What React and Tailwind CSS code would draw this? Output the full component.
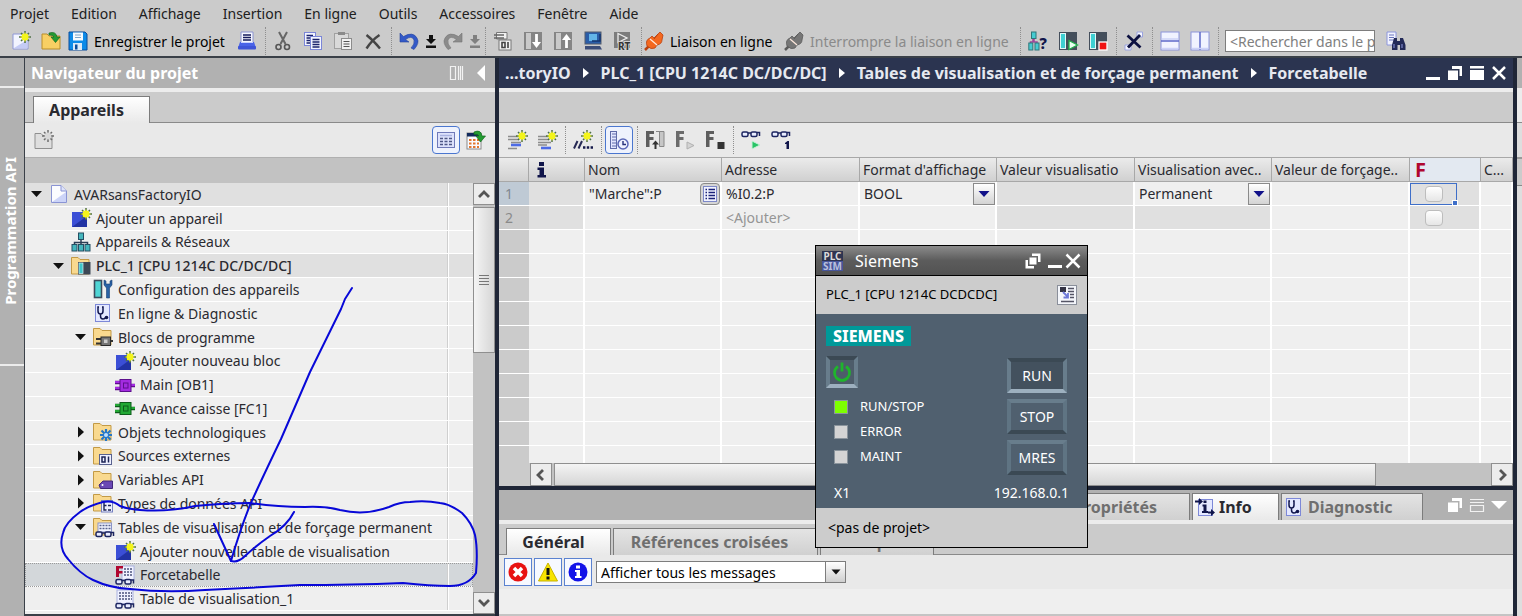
import { useState } from "react";

/* ---------- small icon set (20x20) ---------- */

function Svg({ children, className = "w-5 h-5", box = "0 0 20 20" }) {
    return (
        <svg viewBox={box} fill="none" className={`shrink-0 overflow-visible ${className}`} xmlns="http://www.w3.org/2000/svg">
            {children}
        </svg>
    );
}

const Spark = ({ x = 14, y = 6, gray = false }) => (
    <g transform={`translate(${x} ${y})`}>
        <path d="M0-6V6M-6 0H6M-4-4L4 4M4-4L-4 4" stroke={gray ? "#6e6e6e" : "#4f7046"} strokeWidth="1.5" />
        <circle r="3.400" fill={gray ? "#d8d8d8" : "#f4f51c"} />
        {!gray && <path d="M0-4.500V4.500M-4.500 0H4.500M-3-3L3 3M3-3L-3 3" stroke="#f4f51c" strokeWidth="0.900" />}
    </g>
);

const Folder = () => (
    <path d="M0.500 18V1.500H7L9 3.500H18V18Z" fill="#f9d98f" stroke="#c39a45" />
);

const Glasses = ({ y = 16, color = "#1c2560" }) => (
    <g transform={`translate(0 ${y})`} stroke={color} strokeWidth="1.5">
        <rect x="1" y="-2" width="6" height="4.5" rx="1.5" fill="#e8ecff" />
        <rect x="10" y="-2" width="6" height="4.5" rx="1.5" fill="#e8ecff" />
        <path d="M7-1H10M16-1.5H18.5V2" />
    </g>
);

const Stetho = () => (
    <>
        <rect x="2.5" y="1.5" width="14" height="17" fill="#e4e8ff" stroke="#7d88d8" />
        <path d="M6 4H5V8Q5 11 7.500 11Q10 11 10 8V4H9M7.500 11V13Q7.500 16 10 16Q12 16 12.500 14.500" stroke="#11164d" strokeWidth="1.5" />
        <circle cx="13.500" cy="14.500" r="1.800" fill="#11164d" />
    </>
);

const Block = ({ fill, dark }) => (
    <>
        <path d="M0 7.500H6M0 13.500H6M15 10.500H20" stroke={dark} strokeWidth="3.5" />
        <path d="M0 7H5M0 13H5M15 10H20" stroke={fill} strokeWidth="2" />
        <rect x="5" y="4.500" width="11" height="12" fill={fill} stroke={dark} />
        <rect x="8.500" y="8" width="4.500" height="5" fill={fill} stroke={dark} />
    </>
);

const Plug = ({ main, dark }) => (
    <>
        <path d="M1 19L5 15" stroke={dark} strokeWidth="2.5" />
        <path d="M3 15Q1 9 6 7L8 5L10 7L14 3L16 1L19 4L18 9Q18 13 13 14L11 17Q7 19 3 15Z" fill={main} stroke={dark} strokeWidth="0.8" />
        <path d="M6 8L13 14" stroke="#ffe9dd" strokeWidth="1.2" />
        <path d="M10 8L14 3" stroke={dark} strokeWidth="1" />
    </>
);

const icons = {
    newProject: <><path d="M2 3H12L17 8V18H2Z" fill="#f2f4ff" stroke="#8e97d6" /><path d="M3 17L16 9V17Z" fill="#c4cbf5" /><Spark /></>,
    openProject: <><path d="M1 18V3H6L8 5H19V18Z" fill="#f8cf63" stroke="#b98d2b" /><path d="M8 2Q15 0 16 6H19L14.500 11.500L10 6H13Q12 3.500 8 4Z" fill="#239b32" stroke="#14691f" strokeWidth="0.7" /></>,
    save: <><path d="M1 1H17L19 3V19H1Z" fill="#0d8be8" stroke="#0a4c9c" /><rect x="5" y="1.5" width="10" height="8" fill="#f5fbff" /><path d="M7 4H13M7 6.500H13" stroke="#7ea5c8" /><rect x="5" y="12" width="9" height="7" fill="#dceaf7" /><rect x="7" y="13.500" width="2.500" height="5" fill="#0a4c9c" /></>,
    print: <><path d="M4 12V1H16V12Z" fill="#f6f7ff" stroke="#8a93d0" /><path d="M6 4H14M6 6.500H14M6 9H14" stroke="#141b5c" strokeWidth="1.4" /><path d="M1 17L3 11H17L19 17Z" fill="#4a63e8" /><rect x="1" y="15" width="18" height="3.500" rx="1" fill="#3f55d8" /><path d="M4 11.500H16" stroke="#c9d2ff" /></>,
    cut: <><path d="M6 1L12.500 13M14 1L7.500 13" stroke="#666" strokeWidth="2" /><circle cx="5.500" cy="16" r="2.500" stroke="#555" strokeWidth="1.600" /><circle cx="14" cy="16" r="2.500" stroke="#555" strokeWidth="1.600" /></>,
    copy: <><rect x="1.500" y="1.500" width="11" height="13" fill="#f3f5ff" stroke="#7b86d8" /><path d="M3.500 4.500H10M3.500 7H10M3.500 9.500H10M3.500 12H10" stroke="#1a226b" strokeWidth="1.300" /><rect x="7.500" y="5.500" width="11" height="13" fill="#f3f5ff" stroke="#7b86d8" /><path d="M9.500 8.500H16.500M9.500 11H16.500M9.500 13.500H16.500M9.500 16H16.500" stroke="#1a226b" strokeWidth="1.300" /></>,
    paste: <><rect x="1.500" y="2.500" width="14" height="15" fill="#d9d9d9" stroke="#a0a0a0" /><rect x="5" y="1" width="7" height="3" fill="#8a8a8a" /><rect x="8.500" y="7.500" width="10" height="11" fill="#f2f2f2" stroke="#8c8c8c" /><path d="M10.500 10.500H16.500M10.500 13H16.500M10.500 15.500H16.500" stroke="#555" strokeWidth="1.200" /></>,
    del: <path d="M3.500 4Q10 9 17 17.500M16.500 4Q9 9 3.500 17.500" stroke="#454545" strokeWidth="2.400" />,
    undo: <path d="M1 2V11H10L6.500 8.500Q13 4 15 9Q16 13 12 17L15 18.500Q21 12 18 7Q14 0 4.500 5.500Z" fill="#3359c8" stroke="#27449a" strokeWidth="0.600" />,
    redo: <path d="M19 2V11H10L13.500 8.500Q7 4 5 9Q4 13 8 17L5 18.500Q-1 12 2 7Q6 0 15.500 5.500Z" fill="#8b8b8b" stroke="#757575" strokeWidth="0.600" />,
    compile: <><path d="M3.500 1.500H14V8H3.500Z" fill="#f1f1f1" stroke="#777" /><path d="M1 4H11M1 7H11" stroke="#666" strokeWidth="1.500" /><rect x="6" y="9" width="12" height="10" fill="#f1f1f1" stroke="#777" /><path d="M9 11.500H12V16.500H9ZM15 11V17" stroke="#444" strokeWidth="1.600" /></>,
    download: <><rect x="1" y="1" width="18" height="18" fill="#858585" /><rect x="3" y="2" width="5" height="16" fill="#c9c9c9" /><path d="M13.500 3V12" stroke="#fff" strokeWidth="2.800" /><path d="M9 11H18L13.500 17Z" fill="#fff" /></>,
    upload: <><rect x="1" y="1" width="18" height="18" fill="#858585" /><rect x="3" y="2" width="5" height="16" fill="#c9c9c9" /><path d="M13.500 8V17" stroke="#fff" strokeWidth="2.800" /><path d="M9 9H18L13.500 3Z" fill="#fff" /></>,
    simulate: <><rect x="2" y="1" width="16" height="12" fill="#2a5da8" stroke="#555c6c" /><rect x="6" y="3" width="8" height="7" fill="#63b5e8" /><path d="M9 10H17V3" stroke="#16356d" strokeWidth="1.500" /><path d="M2 15H17L19 18.500H2Z" fill="#3c4d78" /></>,
    runtime: <><rect x="1" y="1" width="16" height="16" fill="#7c7c7c" /><path d="M5 2.500L14 7L5 11.500Z" fill="#777" stroke="#eee" strokeWidth="1.300" /><text x="5" y="19" fontSize="10" fontWeight="700" fill="#333" stroke="#d0d0d0" strokeWidth="2" paintOrder="stroke">RT</text></>,
    goOnline: <Plug main="#f4681f" dark="#b9400f" />,
    goOffline: <Plug main="#767676" dark="#5b5b5b" />,
    access: <><path d="M5 7V11M2.500 14V11H9V14M6 5V11" stroke="#a0459b" strokeWidth="1.500" /><rect x="3.500" y="1" width="4.500" height="6.500" fill="#46cbd1" stroke="#2f777b" /><rect x="0.800" y="12" width="4" height="7" fill="#46cbd1" stroke="#2f777b" /><rect x="7" y="12" width="4" height="7" fill="#46cbd1" stroke="#2f777b" /><text x="11.500" y="18" fontSize="15" fontWeight="800" fill="#10154a">?</text></>,
    startCpu: <><rect x="1" y="1" width="18" height="18" fill="#444e5b" /><rect x="2.500" y="2.500" width="5" height="15" fill="#3fd0d3" stroke="#e0f8f8" /><path d="M11 9.500L19.500 14L11 18.500Z" fill="#e8fff0" stroke="#1faf4c" strokeWidth="1.300" /></>,
    stopCpu: <><rect x="1" y="1" width="18" height="18" fill="#444e5b" /><rect x="2.500" y="2.500" width="5" height="15" fill="#3fd0d3" stroke="#e0f8f8" /><rect x="11" y="11" width="8" height="8" fill="#f01212" stroke="#fff" strokeWidth="1.300" /></>,
    crossRef: <><path d="M13 1H18.500V6H13ZM1 14H7V19H1Z" fill="#f5f6ff" stroke="#9aa3e0" /><path d="M3.500 4.500L16.500 16.500M16 4L4 16.500" stroke="#0c1040" strokeWidth="2.800" /></>,
    splitH: <><rect x="1" y="1" width="18" height="18" fill="#f1f3ff" stroke="#8d96dc" /><path d="M1 10H19" stroke="#5d68c8" strokeWidth="1.500" /><path d="M2 8H18M2 17.500H18" stroke="#cdd3f8" strokeWidth="1.500" /></>,
    splitV: <><rect x="1" y="1" width="18" height="18" fill="#f1f3ff" stroke="#8d96dc" /><path d="M10 1V19" stroke="#5d68c8" strokeWidth="1.500" /><path d="M2 17.500H18" stroke="#cdd3f8" strokeWidth="1.500" /></>,
    find: <><path d="M1 1H10V14H1Z" fill="#f1f3ff" stroke="#8d96dc" /><path d="M3 4H8M3 6.500H8M3 9H8" stroke="#6b75bd" /><path d="M8 7H11V10H14V7H17L19.500 14V19H14V14H11.500V19H6V14Z" fill="#232a58" /><path d="M8 13V17M16 13V17" stroke="#7c86c8" strokeWidth="1.200" /></>,
    addFolder: <><path d="M1 18.500V3.500H7L9 5.500H18V18.500Z" fill="#dedede" stroke="#8f8f8f" /><Spark x={14} y={6} gray /></>,
    listView: <><rect x="1.500" y="2.500" width="17" height="15" fill="#dde2fb" stroke="#6f79b8" /><path d="M4 5.500H16" stroke="#a9b2e0" strokeWidth="1.500" /><path d="M4 8.500H16M4 11.500H16M4 14.500H16" stroke="#4d5685" strokeWidth="1.500" strokeDasharray="3 1.500" /></>,
    gridGo: <><rect x="1" y="3" width="14" height="16" fill="#f9fbff" stroke="#8a8a8a" /><rect x="1" y="3" width="12" height="3.500" fill="#122a5c" /><path d="M3 10H13M3 13.500H13M3 17H13" stroke="#e3762d" strokeWidth="2.200" strokeDasharray="2.500 1.500" /><path d="M8 2Q15-1 16 6H19.500L14.500 12L10 6H13Q12 3.500 8 4.500Z" fill="#239b32" stroke="#14691f" strokeWidth="0.700" /></>,
    project: <><path d="M2.500 1.500H12L17.500 7V18.500H2.500Z" fill="#fbfcff" stroke="#8a94d4" /><path d="M3 18L17 8V18Z" fill="#ccd4f8" /><path d="M12 1.500V7H17.500" fill="#dfe4fb" stroke="#8a94d4" /></>,
    addBlue: <><rect x="1" y="4" width="15" height="15" fill="#3b4fd6" /><path d="M1 19L16 8V19Z" fill="#2233a4" /><Spark x={15} y={6} /></>,
    network: <><path d="M10 7V10M3.500 13V10.500H16.500V13M10 10V13" stroke="#2b3e55" strokeWidth="1.500" /><rect x="7.500" y="1" width="5" height="6.500" fill="#46b6bd" stroke="#244f63" /><rect x="1" y="12.500" width="5" height="6.500" fill="#46b6bd" stroke="#244f63" /><rect x="7.500" y="12.500" width="5" height="6.500" fill="#46b6bd" stroke="#244f63" /><rect x="14" y="12.500" width="5" height="6.500" fill="#46b6bd" stroke="#244f63" /></>,
    plc: <><Folder /><rect x="7" y="6" width="12.500" height="12.500" fill="#3d4856" /><rect x="8" y="7" width="4" height="10.500" fill="#3fc5c9" stroke="#d8f4f4" strokeWidth="0.700" /></>,
    config: <><rect x="1.500" y="1.500" width="7" height="17" fill="#4fd5d5" stroke="#3b4a5b" strokeWidth="1.600" /><path d="M11 1V6L13.500 9V19H16.500V9L19 6V1L17 2V5H13V2Z" fill="#2a62a5" stroke="#173f74" strokeWidth="0.600" /></>,
    diag: <Stetho />,
    blocks: <><Folder /><path d="M3 12H9M3 16.500H9M17 14H20" stroke="#333" strokeWidth="2" /><rect x="8" y="10" width="9.500" height="8.500" fill="#777" stroke="#2c2c2c" /><rect x="11" y="12.500" width="3.500" height="3.500" fill="#ccc" /></>,
    ob: <Block fill="#a32be0" dark="#5d0f8c" />,
    fc: <Block fill="#22a834" dark="#0d5c1a" />,
    tech: <><Folder /><path d="M13 7V19M7 13H19M8.500 8.500L17.500 17.500M17.500 8.500L8.500 17.500" stroke="#2577c9" strokeWidth="2.200" /><circle cx="13" cy="13" r="2" fill="#bfe0ff" /></>,
    sources: <><Folder /><rect x="6.500" y="8.500" width="12" height="10" fill="#eef0ff" stroke="#59628f" /><path d="M9 11H12V16H9ZM15.500 10.500V16.500" stroke="#1c2354" strokeWidth="1.500" /></>,
    tags: <><Folder /><path d="M6 15L10 11H19.500V18.500H7.500Z" fill="#6a47b4" stroke="#40277a" /><circle cx="9.500" cy="15" r="1" fill="#fff" /></>,
    types: <><Folder /><rect x="8.500" y="7.500" width="11" height="11.500" fill="#eef0ff" stroke="#7480c0" /><path d="M11 9V17H13.500M11 12.500H13.500M15 12.500H18M15 17H18" stroke="#1c2354" strokeWidth="1.400" /></>,
    watchTables: <><Folder /><rect x="5" y="6" width="13.500" height="9" fill="#f3f5ff" stroke="#8a94c8" /><path d="M6.500 8.500H17.500M6.500 11.500H17.500" stroke="#59628f" strokeDasharray="2 1" strokeWidth="1.300" /><g transform="translate(2 1)"><Glasses y={16} /></g></>,
    force: <><rect x="7" y="1" width="12" height="14" fill="#f0f2ff" stroke="#aab2e0" /><path d="M9 4H18M9 7H18M9 10H18" stroke="#4c547f" strokeDasharray="2 1" strokeWidth="1.300" /><path d="M1 1H8V3.500H4V6H7.500V8.500H4V12H1Z" fill="#b0072f" /><g transform="translate(0 1)"><Glasses y={15.500} /></g></>,
    watch: <><rect x="2" y="1" width="16" height="14" fill="#f0f2ff" stroke="#aab2e0" /><path d="M4 4H17M4 7H17M4 10H17" stroke="#4c547f" strokeDasharray="2 1" strokeWidth="1.300" /><g transform="translate(0 1)"><Glasses y={15.500} /></g></>,
    rowAbove: <><path d="M1 6.500H12M1 9.500H12M4 12.500H14M1 18.500H10" stroke="#8c8c8c" strokeWidth="1.600" /><path d="M4 15H14" stroke="#4d6be6" strokeWidth="2.600" /><Spark x={15} y={6} /></>,
    rowBelow: <><path d="M1 6.500H12M1 9.500H12M1 12.500H14M1 15H10" stroke="#8c8c8c" strokeWidth="1.600" /><path d="M4 18H14" stroke="#4d6be6" strokeWidth="2.600" /><Spark x={15} y={6} /></>,
    comment: <><path d="M1 18.500L4.500 11M5.500 18.500L9 11" stroke="#272a55" strokeWidth="2" /><path d="M10 17.500H20" stroke="#15184a" strokeWidth="2.400" strokeDasharray="2.400 1.400" /><Spark x={14} y={6} /></>,
    clock: <><rect x="1.500" y="1.500" width="6" height="17" fill="#e2e6ff" stroke="#5f6ba8" /><path d="M3 4H7M3 7H7M3 10H7M3 13H7M3 16H7" stroke="#5f6ba8" /><circle cx="14" cy="14" r="5" fill="#eef1ff" stroke="#5a67b8" strokeWidth="1.500" /><path d="M14 11V14.500H17" stroke="#26307a" strokeWidth="1.400" /></>,
    forceAll: <><path d="M1 1H9V4H4.500V7H8.500V10H4.500V17H1Z" fill="#5e5e5e" /><path d="M10.500 19V13" stroke="#333" strokeWidth="2" /><path d="M7 14.500L10.500 10.500L14 14.500Z" fill="#333" /><path d="M11 1.500H19V16.500H14.500V1.500" fill="#c6c6c6" stroke="#888" /></>,
    forceStart: <><path d="M1 1H9V4H4.500V7H8.500V10H4.500V17H1Z" fill="#6b6b6b" /><path d="M12 12L19 15.500L12 19Z" fill="#d4d4d4" stroke="#b0b0b0" /></>,
    forceStop: <><path d="M1 1H9V4H4.500V7H8.500V10H4.500V17H1Z" fill="#5e5e5e" /><rect x="12.500" y="12" width="7" height="7" fill="#333" /></>,
    watchRun: <><Glasses y={4} /><path d="M11 11L19 15L11 19Z" fill="#28c466" stroke="#c6f3d8" /></>,
    watchOnce: <><Glasses y={4} /><path d="M14 13L16.500 11H18V19H15.500V14H14Z" fill="#10154a" /></>,
};

const Icon = ({ name, className }) => <Svg className={className}>{icons[name]}</Svg>;

function IconButton({ name, label, active = false }) {
    return (
        <button aria-label={label} title={label} className="flex w-[30px] h-7 items-center justify-center shrink-0">
            {active ? (
                <span className="flex w-7 h-7 items-center justify-center rounded-sm border border-[#4a76cf] bg-[#eef2fd]">
                    <Icon name={name} />
                </span>
            ) : (
                <Icon name={name} />
            )}
        </button>
    );
}

const Sep = () => (
    <span className="flex w-1.5 h-7 justify-center shrink-0">
        <span className="border-l border-dotted border-[#8f8f8f]" />
    </span>
);

const MoreArrow = ({ color, label }) => (
    <button aria-label={label} className="flex w-3.5 h-7 items-center justify-center shrink-0">
        <Svg className="w-3 h-4" box="0 0 12 16">
            <path d="M4 2H8V6H11L6 11L1 6H4ZM1 12.500H11V15H1Z" fill={color} />
        </Svg>
    </button>
);

/* ---------- menu + main toolbar ---------- */

const menus = ["Projet", "Edition", "Affichage", "Insertion", "En ligne", "Outils", "Accessoires", "Fenêtre", "Aide"];

function MenuBar() {
    return (
        <nav className="flex h-[26px] items-center gap-[22px] pl-2.5 text-[14px] text-[#202020]">
            {menus.map((m) => (
                <button key={m}>{m}</button>
            ))}
        </nav>
    );
}

function MainToolbar() {
    return (
        <div className="flex h-8 items-center pl-1.5 border-b-2 border-[#3a4048] text-[14px]">
            <IconButton name="newProject" label="Nouveau projet" />
            <IconButton name="openProject" label="Ouvrir un projet" />
            <button className="flex w-[166px] shrink-0 items-center gap-1.5 pl-0.5">
                <Icon name="save" />
                Enregistrer le projet
            </button>
            <IconButton name="print" label="Imprimer" />
            <Sep />
            <IconButton name="cut" label="Couper" />
            <IconButton name="copy" label="Copier" />
            <IconButton name="paste" label="Coller" />
            <IconButton name="del" label="Supprimer" />
            <Sep />
            <IconButton name="undo" label="Annuler" />
            <MoreArrow color="#111111" label="Liste des actions à annuler" />
            <IconButton name="redo" label="Rétablir" />
            <MoreArrow color="#808080" label="Liste des actions à rétablir" />
            <Sep />
            <IconButton name="compile" label="Compiler" />
            <IconButton name="download" label="Charger dans l'appareil" />
            <IconButton name="upload" label="Charger depuis l'appareil" />
            <IconButton name="simulate" label="Démarrer la simulation" />
            <IconButton name="runtime" label="Démarrer Runtime" />
            <Sep />
            <button className="flex w-[140px] shrink-0 items-center gap-1.5">
                <Icon name="goOnline" />
                Liaison en ligne
            </button>
            <button className="flex w-[233px] shrink-0 items-center gap-1.5 text-[#8a8a8a]">
                <Icon name="goOffline" />
                Interrompre la liaison en ligne
            </button>
            <Sep />
            <IconButton name="access" label="Abonnés accessibles" />
            <IconButton name="startCpu" label="Démarrer CPU" />
            <IconButton name="stopCpu" label="Arrêter CPU" />
            <Sep />
            <IconButton name="crossRef" label="Références croisées" />
            <Sep />
            <IconButton name="splitH" label="Partager horizontalement" />
            <IconButton name="splitV" label="Partager verticalement" />
            <Sep />
            <input
                aria-label="Rechercher dans le projet"
                placeholder="<Rechercher dans le projet>"
                className="ml-1 mr-1.5 h-[22px] w-[150px] border border-[#7d7d7d] bg-white pl-1 placeholder:text-[#808080]"
            />
            <IconButton name="find" label="Rechercher" />
        </div>
    );
}

/* ---------- project tree ---------- */

const tree = [
    { level: 0, icon: "project", text: "AVARsansFactoryIO", open: true, shade: true },
    { level: 1, icon: "addBlue", text: "Ajouter un appareil" },
    { level: 1, icon: "network", text: "Appareils & Réseaux" },
    { level: 1, icon: "plc", text: "PLC_1 [CPU 1214C DC/DC/DC]", open: true, shade: true, strong: true },
    { level: 2, icon: "config", text: "Configuration des appareils" },
    { level: 2, icon: "diag", text: "En ligne & Diagnostic" },
    { level: 2, icon: "blocks", text: "Blocs de programme", open: true },
    { level: 3, icon: "addBlue", text: "Ajouter nouveau bloc" },
    { level: 3, icon: "ob", text: "Main [OB1]" },
    { level: 3, icon: "fc", text: "Avance caisse [FC1]" },
    { level: 2, icon: "tech", text: "Objets technologiques", closed: true },
    { level: 2, icon: "sources", text: "Sources externes", closed: true },
    { level: 2, icon: "tags", text: "Variables API", closed: true },
    { level: 2, icon: "types", text: "Types de données API", closed: true },
    { level: 2, icon: "watchTables", text: "Tables de visualisation et de forçage permanent", open: true },
    { level: 3, icon: "addBlue", text: "Ajouter nouvelle table de visualisation" },
    { level: 3, icon: "force", text: "Forcetabelle" },
    { level: 3, icon: "watch", text: "Table de visualisation_1" },
];

const indents = ["pl-0.5", "pl-6", "pl-[46px]", "pl-[68px]"];

function TreeRow({ item, selected, onSelect }) {
    const bg = selected ? "bg-[#d3d7da] outline outline-dotted outline-[#9a9a9a] -outline-offset-1" : item.shade ? "bg-[#e0e0e0]" : "bg-[#efefef]";

    return (
        <li className={`flex min-h-0 border-b border-white ${bg}`}>
            <button
                onClick={onSelect}
                className={`flex min-w-0 flex-1 items-center overflow-hidden whitespace-nowrap border-r border-[#cfcfcf] text-[#2a2a30] ${indents[item.level]}`}
            >
                <span className="flex w-[22px] shrink-0 pl-1">
                    {item.open && <Svg className="w-3 h-3" box="0 0 12 12"><path d="M0 3H11L5.500 9Z" fill="#111" /></Svg>}
                    {item.closed && <Svg className="w-3 h-3" box="0 0 12 12"><path d="M3 0.500V11.500L9 6Z" fill="#111" /></Svg>}
                </span>
                <Icon name={item.icon} />
                <span className={item.strong ? "pl-[5px] font-medium" : "pl-[5px]"}>{item.text}</span>
            </button>
            <span className="w-[25px] border-l border-white" />
        </li>
    );
}

const Chevron = ({ d }) => (
    <Svg className="w-3.5 h-3.5" box="0 0 14 14">
        <path d={d} stroke="#555" strokeWidth="2.800" />
    </Svg>
);

function Navigator() {
    const [selected, setSelected] = useState(16);

    return (
        <aside className="flex w-[471px] shrink-0 flex-col border-l border-[#3a4048]">
            <header className="flex h-[30px] shrink-0 items-center bg-[#b1b1b1] pl-1.5 pr-2 text-[16px] font-bold text-white">
                <h2 className="flex-1">Navigateur du projet</h2>
                <Svg className="mr-2.5 w-4 h-4" box="0 0 16 16">
                    <path d="M1.500 1V15M6.500 1V15M1 1.500H7M1 14.500H7M9.500 1V15M11.500 1V15M13.500 1V15" stroke="#f2f2f2" strokeWidth="1.200" />
                </Svg>
                <Svg className="w-3 h-4" box="0 0 12 16"><path d="M10 0V16L2 8Z" fill="#fff" /></Svg>
            </header>
            <div className="flex h-[35px] shrink-0 items-end border-t-4 border-[#ececec] bg-[#cbcbcb]">
                <span className="h-px w-2 bg-[#8a8a8a]" />
                <button className="h-[27px] w-[117px] border border-b-0 border-[#7c7c7c] bg-linear-to-b from-white to-[#e9e9e9] pr-2.5 text-[16px] font-bold text-[#2a2a30]">
                    Appareils
                </button>
                <span className="h-px flex-1 bg-[#8a8a8a]" />
            </div>
            <div className="flex h-[34px] shrink-0 items-center bg-[#e9e9e9] pl-1">
                <IconButton name="addFolder" label="Nouveau groupe" />
                <span className="flex-1" />
                <IconButton name="listView" label="Vue détaillée" active />
                <IconButton name="gridGo" label="Afficher la vue d'ensemble" />
                <span className="w-1" />
            </div>
            <div className="h-[26px] shrink-0 border-t border-[#b0b0b0] bg-[#c2c2c2]" />
            <div className="flex min-h-0 flex-1 border-b-2 border-[#3a4048]">
                <div className="min-w-0 flex-1 overflow-hidden bg-[#efefef]">
                    <ul className="grid h-[428px] grid-rows-[repeat(18,minmax(0,1fr))] text-[14px]">
                        {tree.map((item, i) => (
                            <TreeRow key={i} item={item} selected={i === selected} onSelect={() => setSelected(i)} />
                        ))}
                    </ul>
                </div>
                <div className="flex w-[22px] shrink-0 flex-col bg-[#c2c2c2]">
                    <button aria-label="Défiler vers le haut" className="flex h-[22px] items-center justify-center border border-[#8f8f8f] bg-[#ececec]">
                        <Chevron d="M2 10L7 5L12 10" />
                    </button>
                    <div className="mt-0.5 flex h-[146px] items-center justify-center border border-[#8f8f8f] bg-linear-to-r from-[#f4f4f4] to-[#d6d6d6]">
                        <Svg className="w-3 h-3" box="0 0 12 12">
                            <path d="M1 1.500H11M1 4.500H11M1 7.500H11M1 10.500H11" stroke="#777" />
                        </Svg>
                    </div>
                    <span className="flex-1" />
                    <button aria-label="Défiler vers le bas" className="flex h-[22px] items-center justify-center border border-[#8f8f8f] bg-[#ececec]">
                        <Chevron d="M2 4L7 9L12 4" />
                    </button>
                </div>
            </div>
        </aside>
    );
}

/* ---------- force table ---------- */

const crumbs = ["...toryIO", "PLC_1 [CPU 1214C DC/DC/DC]", "Tables de visualisation et de forçage permanent", "Forcetabelle"];

function TitleBar() {
    return (
        <header className="flex h-[30px] shrink-0 items-center bg-[#2b3450] pl-1.5 pr-1.5 text-[16px] font-bold text-[#e6e9f0]">
            <ol className="flex flex-1 items-center whitespace-nowrap">
                {crumbs.map((c, i) => (
                    <li key={c} className="flex items-center">
                        {i > 0 && <Svg className="mx-3 w-1.5 h-2.5" box="0 0 6 10"><path d="M0 0V10L6 5Z" fill="#fff" /></Svg>}
                        {c}
                    </li>
                ))}
            </ol>
            <div className="flex gap-1.5">
                <button aria-label="Réduire"><Svg className="w-4 h-4" box="0 0 16 16"><path d="M1 12H15V15H1Z" fill="#fff" /></Svg></button>
                <button aria-label="Détacher"><Svg className="w-4 h-4" box="0 0 16 16"><path d="M5 1H15V11H12.500V4H5Z M1 5.500H11V15H1Z" fill="#fff" /></Svg></button>
                <button aria-label="Agrandir"><Svg className="w-4 h-4" box="0 0 16 16"><path d="M1 1H15V3.500H1ZM1 5H15V15H1Z" fill="#fff" /></Svg></button>
                <button aria-label="Fermer"><Svg className="w-4 h-4" box="0 0 16 16"><path d="M2 2L14 14M14 2L2 14" stroke="#fff" strokeWidth="2.500" /></Svg></button>
            </div>
        </header>
    );
}

function CellSelect({ label, value }) {
    return (
        <div className="relative">
            <select aria-label={label} className="block h-[22px] w-full appearance-none bg-transparent pl-1 outline-none">
                <option>{value}</option>
            </select>
            <span className="pointer-events-none absolute right-0 top-0 flex h-[22px] w-[22px] items-center justify-center border border-[#8a8a8a] bg-linear-to-b from-white to-[#d3d3d3]">
                <Svg className="w-3 h-3" box="0 0 12 12"><path d="M0.500 3H11.500L6 9Z" fill="#12128a" /></Svg>
            </span>
        </div>
    );
}

const Check = ({ label }) => (
    <input
        type="checkbox"
        aria-label={label}
        className="block h-4 w-[18px] appearance-none rounded-sm border border-[#bdbdbd] bg-linear-to-b from-white to-[#e6e6e6] checked:bg-[#4a76cf]"
    />
);

const headCell = "h-6 border-r border-b border-[#a8a8a8] p-0 pl-[3px] text-left font-normal overflow-hidden whitespace-nowrap";
const num = "h-6 border-b border-white p-0 pl-1.5";
const cell = "h-6 border-r-2 border-b border-white p-0";
const cellDark = "h-6 border-r-2 border-b border-white p-0 bg-[#e0e0e0]";

function ForceTable() {
    return (
        <table className="w-full table-fixed border-separate border-spacing-0 bg-[#efefef] text-[14px] leading-5 text-[#2a2a30]">
            <colgroup>
                <col className="w-[30px]" />
                <col className="w-[56px]" />
                <col className="w-[137px]" />
                <col className="w-[138px]" />
                <col className="w-[137px]" />
                <col className="w-[138px]" />
                <col className="w-[137px]" />
                <col className="w-[138px]" />
                <col className="w-[71px]" />
                <col />
            </colgroup>
            <thead>
                <tr className="bg-linear-to-b from-[#ebebeb] to-[#cfcfcf]">
                    <th className={headCell} />
                    <th className={headCell}>
                        <Svg className="ml-1 w-3 h-4" box="0 0 12 16"><path d="M3 0H8V4H3ZM1.500 5.500H8V13H10V15.500H1.500V13H3.500V8H1.500Z" fill="#10154a" /></Svg>
                    </th>
                    <th className={headCell}>Nom</th>
                    <th className={headCell}>Adresse</th>
                    <th className={headCell}>Format d'affichage</th>
                    <th className={headCell}>Valeur visualisatio</th>
                    <th className={headCell}>Visualisation avec..</th>
                    <th className={headCell}>Valeur de forçage..</th>
                    <th className={`${headCell} bg-[#e3e9f1] text-[20px] text-[#b0072f]`}>
                        <b className="pl-0.5">F</b>
                    </th>
                    <th className={headCell}>C...</th>
                </tr>
            </thead>
            <tbody>
                <tr>
                    <td className={`${num} bg-[#bfcad5] text-[#7f8790]`}>1</td>
                    <td className={cellDark} />
                    <td className={cell}>
                        <div className="flex items-center justify-between pl-1">
                            "Marche":P
                            <button aria-label="Choisir une variable" className="flex h-[22px] w-5 items-center justify-center rounded-sm border border-[#8a8a8a] bg-[#d5d5d5]">
                                <Svg className="w-3.5 h-4" box="0 0 14 16">
                                    <rect x="0.500" y="0.500" width="13" height="15" fill="#f1f3ff" stroke="#7d88c8" />
                                    <path d="M2.500 3.500H4M2.500 6.500H4M2.500 9.500H4M2.500 12.500H4M5.500 3.500H12M5.500 6.500H12M5.500 9.500H12M5.500 12.500H12" stroke="#1a2278" strokeWidth="1.300" />
                                </Svg>
                            </button>
                        </div>
                    </td>
                    <td className={cell}><span className="pl-1">%I0.2:P</span></td>
                    <td className={cell}><CellSelect label="Format d'affichage" value="BOOL" /></td>
                    <td className={cellDark} />
                    <td className={cell}><CellSelect label="Visualisation avec" value="Permanent" /></td>
                    <td className={cell} />
                    <td className={cellDark}>
                        <div className="relative flex h-[22px] w-[47px] items-center justify-center border border-[#3f6fc8]">
                            <Check label="Forçage ligne 1" />
                            <span className="absolute -bottom-0.5 -right-0.5 h-1.5 w-1.5 border border-white bg-[#3f6fc8]" />
                        </div>
                    </td>
                    <td className={cell} />
                </tr>
                <tr>
                    <td className={`${num} bg-[#cbcbcb] text-[#8a8a8a]`}>2</td>
                    <td className={cellDark} />
                    <td className={cell} />
                    <td className={cell}><span className="pl-1 text-[#959595]">&lt;Ajouter&gt;</span></td>
                    <td className={cell} />
                    <td className={cellDark} />
                    <td className={cellDark} />
                    <td className={cell} />
                    <td className={cellDark}>
                        <div className="flex w-[47px] justify-center"><Check label="Forçage ligne 2" /></div>
                    </td>
                    <td className={cell} />
                </tr>
                {Array.from({ length: 10 }, (_, r) => (
                    <tr key={r}>
                        <td className={`${num} bg-[#cbcbcb]`} />
                        {Array.from({ length: 9 }, (_, c) => (
                            <td key={c} className={cell} />
                        ))}
                    </tr>
                ))}
            </tbody>
        </table>
    );
}

function Editor() {
    return (
        <section className="flex min-h-0 flex-1 flex-col">
            <TitleBar />
            <div className="h-[35px] shrink-0 border-t-4 border-b border-t-[#ececec] border-b-[#8a8a8a] bg-[#cbcbcb]" />
            <div className="flex h-[34px] shrink-0 items-center bg-[#e9e9e9] pl-[3px]">
                <IconButton name="rowAbove" label="Insérer une ligne au-dessus" />
                <IconButton name="rowBelow" label="Insérer une ligne au-dessous" />
                <Sep />
                <IconButton name="comment" label="Insérer un commentaire" />
                <Sep />
                <IconButton name="clock" label="Mode étendu" active />
                <Sep />
                <IconButton name="forceAll" label="Forcer tout" />
                <IconButton name="forceStart" label="Démarrer le forçage" />
                <IconButton name="forceStop" label="Arrêter le forçage" />
                <Sep />
                <IconButton name="watchRun" label="Visualiser tout" />
                <IconButton name="watchOnce" label="Visualiser une fois" />
            </div>
            <div className="min-h-0 flex-1 overflow-hidden border-t border-[#a8a8a8]">
                <ForceTable />
            </div>
            <div className="flex h-[23px] shrink-0 bg-[#c2c2c2]">
                <span className="w-[31px] bg-[#cbcbcb]" />
                <button aria-label="Défiler à gauche" className="flex w-[22px] items-center justify-center border border-[#8f8f8f] bg-[#ececec]">
                    <Chevron d="M9 2L4 7L9 12" />
                </button>
                <span className="ml-0.5 w-[822px] border border-[#8f8f8f] bg-linear-to-b from-[#f4f4f4] to-[#d6d6d6]" />
                <span className="flex-1" />
                <button aria-label="Défiler à droite" className="flex w-[22px] items-center justify-center border border-[#8f8f8f] bg-[#ececec]">
                    <Chevron d="M5 2L10 7L5 12" />
                </button>
            </div>
        </section>
    );
}

/* ---------- inspector ---------- */

const tabOff = "border border-b-0 border-[#7c7c7c] bg-linear-to-b from-[#e4e4e4] to-[#d0d0d0] text-[#6f6f6f]";
const tabOn = "border border-b-0 border-[#7c7c7c] bg-linear-to-b from-white to-[#e9e9e9] text-[#2a2a30]";

function Inspector() {
    return (
        <section className="flex h-[130px] shrink-0 flex-col border-t-4 border-[#1f2637] bg-[#efefef]">
            <div className="flex h-[30px] shrink-0 items-end justify-end bg-[#b1b1b1] pr-1.5 text-[16px] font-bold">
                <button className={`h-[27px] w-[130px] pr-8 text-right ${tabOff}`}>Propriétés</button>
                <button className={`ml-0.5 flex h-[27px] w-[87px] items-center gap-1 pl-0.5 ${tabOn}`}>
                    <Svg>
                        <rect x="3.500" y="2.500" width="14" height="16" fill="#e4e8ff" stroke="#7d88d8" />
                        <path d="M0 3.500H4V1L8 4.500L4 8V5.500H0ZM13 14.500H16V12L20 15.500L16 19V16.500H13Z" fill="#10154a" />
                        <path d="M8.500 3.500H11.500V6H8.500ZM7.500 7.500H11.500V14H13V16H7V14H8.500V9.500H7.500Z" fill="#10154a" />
                    </Svg>
                    Info
                </button>
                <button className={`ml-0.5 flex h-[27px] w-[142px] items-center gap-1 pl-0.5 ${tabOff}`}>
                    <Icon name="diag" />
                    Diagnostic
                </button>
                <div className="ml-6 flex h-[30px] items-center gap-1.5">
                    <button aria-label="Détacher"><Svg className="w-4 h-4" box="0 0 16 16"><path d="M5 1H15V11H12.500V4H5Z M1 5.500H11V15H1Z" fill="#fff" /></Svg></button>
                    <button aria-label="Vue"><Svg className="w-4 h-4" box="0 0 16 16"><path d="M1 2.500H15M1 5.500H15M1.500 8.500H14.500V14.500H1.500Z" stroke="#f2f2f2" strokeWidth="1.200" /></Svg></button>
                    <button aria-label="Replier"><Svg className="w-4 h-4" box="0 0 16 16"><path d="M0 4H16L8 12Z" fill="#fff" /></Svg></button>
                </div>
            </div>
            <div className="flex h-[35px] shrink-0 items-end border-t-4 border-[#ececec] bg-[#cbcbcb] text-[16px] font-bold">
                <span className="h-px w-[7px] bg-[#8a8a8a]" />
                <button className={`h-[27px] w-[105px] pr-2.5 ${tabOn}`}>Général</button>
                <button className={`ml-0.5 h-[27px] w-[205px] border-b pr-3 ${tabOff}`}>Références croisées</button>
                <button className={`ml-0.5 h-[27px] w-[114px] ${tabOff}`}>Compiler</button>
                <span className="h-px flex-1 bg-[#8a8a8a]" />
            </div>
            <div className="flex h-[34px] shrink-0 items-center bg-[#e9e9e9] pl-[5px] text-[14px]">
                <button aria-label="Erreurs" className="mr-0.5 flex h-7 w-7 items-center justify-center border border-[#5b82d0] bg-[#f7f9ff]">
                    <Svg><circle cx="10" cy="10" r="9.500" fill="#e81212" /><path d="M6 6L14 14M14 6L6 14" stroke="#fff" strokeWidth="3.500" /></Svg>
                </button>
                <button aria-label="Avertissements" className="mr-0.5 flex h-7 w-7 items-center justify-center border border-[#5b82d0] bg-[#f7f9ff]">
                    <Svg><path d="M10 1L19.500 19H0.500Z" fill="#f8e400" stroke="#c7b200" /><path d="M10 6V13M10 14.500V17.500" stroke="#111" strokeWidth="3" /></Svg>
                </button>
                <button aria-label="Informations" className="mr-1 flex h-7 w-7 items-center justify-center border border-[#5b82d0] bg-[#f7f9ff]">
                    <Svg><circle cx="10" cy="10" r="9.500" fill="#1212e8" /><path d="M8 3.500H12V6.500H8ZM7 8H12V14H13.500V16H7V14H8.500V10H7Z" fill="#fff" /></Svg>
                </button>
                <div className="relative">
                    <select aria-label="Filtre des messages" className="block h-[22px] w-[250px] appearance-none border border-[#7d7d7d] bg-white pl-1 outline-none">
                        <option>Afficher tous les messages</option>
                    </select>
                    <span className="pointer-events-none absolute right-0 top-0 flex h-[22px] w-[21px] items-center justify-center border border-[#7d7d7d] bg-linear-to-b from-white to-[#cfcfcf]">
                        <Svg className="w-2.5 h-2.5" box="0 0 10 10"><path d="M0.500 2.500H9.500L5 7.500Z" fill="#111" /></Svg>
                    </span>
                </div>
            </div>
            <div className="flex-1 border-b-2 border-[#c4c4c4]" />
        </section>
    );
}

/* ---------- PLCSIM window ---------- */

const leds = [
    { text: "RUN/STOP", color: "bg-[#7dff00]" },
    { text: "ERROR", color: "bg-[#d4d4d4]" },
    { text: "MAINT", color: "bg-[#d4d4d4]" },
];

const modeButton = "h-[35px] w-[60px] border-4 text-[14px] leading-5";
const raised = "border-t-[#687d8c] border-x-[#5f7483] border-b-[#3b4954] bg-[#50606f]";
const pressed = "border-t-[#3b4954] border-x-[#687d8c] border-b-[#9db0bf] bg-[#43515e]";

function PlcSim() {
    return (
        <div role="dialog" aria-label="Siemens" className="absolute left-[815px] top-[245px] w-[273px] border border-black bg-[#cccccc] text-[13px] text-black">
            <header className="flex h-[30px] items-center border-b border-black bg-linear-to-b from-[#8c8c8c] via-[#5c5c5c] to-[#525252] pl-1.5 pr-1.5 text-white">
                <div aria-hidden="true" className="flex h-5 w-[21px] flex-col items-center bg-[#2e3450] text-[10px] font-bold leading-[10px]">
                    <span className="text-[#dadada]">PLC</span>
                    <span className="w-full bg-[#47559a] text-center text-[#b9c0dd]">SIM</span>
                </div>
                <h2 className="flex-1 pl-3 text-[16px]">Siemens</h2>
                <button aria-label="Détacher" className="mr-1.5">
                    <Svg className="w-4 h-4" box="0 0 16 16"><path d="M7 0.500H15.500V9H13V3H7ZM4.500 4.500H11.500V11.500H4.500ZM0.500 7H3V13H9V15.500H0.500Z" fill="#fff" /></Svg>
                </button>
                <button aria-label="Réduire"><Svg className="w-4 h-4" box="0 0 16 16"><path d="M1 12H15V15H1Z" fill="#fff" /></Svg></button>
                <button aria-label="Fermer" className="ml-0.5"><Svg className="w-4 h-4" box="0 0 16 16"><path d="M1.500 1.500L14.500 14.500M14.500 1.500L1.500 14.500" stroke="#fff" strokeWidth="2.500" /></Svg></button>
            </header>
            <div className="flex h-[38px] items-center justify-between pl-2.5 pr-2.5">
                PLC_1 [CPU 1214C DCDCDC]
                <button aria-label="Vue du projet">
                    <Svg>
                        <rect x="0.500" y="0.500" width="19" height="19" fill="#f4f6fb" stroke="#8a8f9a" />
                        <rect x="3" y="2" width="6" height="5" fill="#334" />
                        <path d="M11 3.500H17M11 6.500H17M13 9.500H17M13 12.500H17M4 16.500H17" stroke="#556" strokeWidth="1.300" />
                        <path d="M6 7L11 12M11 8V12.500H6.500" stroke="#6d78d8" strokeWidth="1.800" />
                    </Svg>
                </button>
            </div>
            <div className="h-[194px] bg-[#50606f] pl-2.5 pr-[18px] pt-3 text-white">
                <span className="flex h-5 w-[85px] items-center justify-center bg-[#009999] text-[16px] font-extrabold">SIEMENS</span>
                <div className="mt-2.5 flex justify-between pr-0.5">
                    <div>
                        <button aria-label="Marche/arrêt" className="flex h-8 w-8 items-center justify-center border-4 border-t-[#3b4954] border-x-[#687d8c] border-b-[#9db0bf] bg-[#4d5c6a]">
                            <Svg>
                                <path d="M6 4.500A7.500 7.500 0 1 0 14 4.500" stroke="#1fb52c" strokeWidth="2.800" />
                                <path d="M10 0.500V9.500" stroke="#1fb52c" strokeWidth="2.800" />
                            </Svg>
                        </button>
                        <ul className="mt-1.5 flex flex-col pl-2">
                            {leds.map((l) => (
                                <li key={l.text} className="flex h-[25px] items-center gap-3">
                                    <span className={`h-3.5 w-3.5 border border-[#8a949c] ${l.color}`} />
                                    {l.text}
                                </li>
                            ))}
                        </ul>
                    </div>
                    <div className="flex flex-col gap-1.5 pt-0.5">
                        <button className={`${modeButton} ${pressed}`}>RUN</button>
                        <button className={`${modeButton} ${raised}`}>STOP</button>
                        <button className={`${modeButton} ${raised}`}>MRES</button>
                    </div>
                </div>
                <div className="mt-2 flex justify-between pl-2 text-[14px] leading-5">
                    <span>X1</span>
                    <span>192.168.0.1</span>
                </div>
            </div>
            <footer className="flex h-[39px] items-center pl-3 text-[14px]">&lt;pas de projet&gt;</footer>
        </div>
    );
}

/* pen marks drawn over the tree */
function Ink() {
    return (
        <svg viewBox="0 0 500 616" fill="none" stroke="#0808d8" strokeWidth="2" strokeLinecap="round" strokeLinejoin="round" className="pointer-events-none absolute left-0 top-0 h-[616px] w-[500px]">
            <path d="M352 288L345 299L341 309L310 372L281 439Q258 487 250 505Q240 530 231 561" />
            <path d="M214 524L231 561Q238 563 245 556Q257 545 270 536Q287 526 294 512" />
            <path d="M120 506Q113 500 103 502Q88 506 80 512Q65 523 63 533Q58 548 68 559Q80 574 93 580Q110 588 130 589Q165 593 205 590Q250 588 300 585Q350 585 403 583Q430 586 450 586Q468 586 476 573Q478 550 475 535Q472 523 462 513Q450 504 440 503Q425 500 410 502Q400 502 389 507Q365 516 340 510Q325 506 305 507Q275 507 250 503Q225 503 195 506Q170 512 140 510Q127 509 120 506" />
        </svg>
    );
}

export default function App() {
    return (
        <div className="relative flex h-screen min-h-[560px] flex-col overflow-hidden bg-[#cbcbcb] font-['Noto_Sans','Open_Sans',sans-serif]">
            <MenuBar />
            <MainToolbar />
            <main className="flex min-h-0 flex-1">
                <div className="flex w-6 shrink-0 flex-col bg-[#b1b1b1]">
                    <div className="h-[30px] border-b-2 border-[#ececec]" />
                    <div className="flex h-[278px] items-center border-b-2 border-[#ececec] pt-2.5">
                        <button className="rotate-180 text-[15px] leading-5 font-bold text-white [writing-mode:vertical-rl]">Programmation API</button>
                    </div>
                </div>
                <Navigator />
                <div className="flex min-w-0 flex-1 flex-col border-x-4 border-[#1f2637]">
                    <Editor />
                    <Inspector />
                </div>
                <div className="w-[5px] shrink-0 bg-[#dedede]">
                    <div className="h-[30px] bg-[#b1b1b1]" />
                    <div className="h-[35px] border-b border-[#8a8a8a] bg-[#ececec]" />
                    <div className="h-9 border-b-2 border-[#9a9a9a]" />
                    <div className="h-[27px] border-b border-[#8a8a8a] bg-[#cbcbcb]" />
                </div>
            </main>
            <PlcSim />
            <Ink />
        </div>
    );
}
